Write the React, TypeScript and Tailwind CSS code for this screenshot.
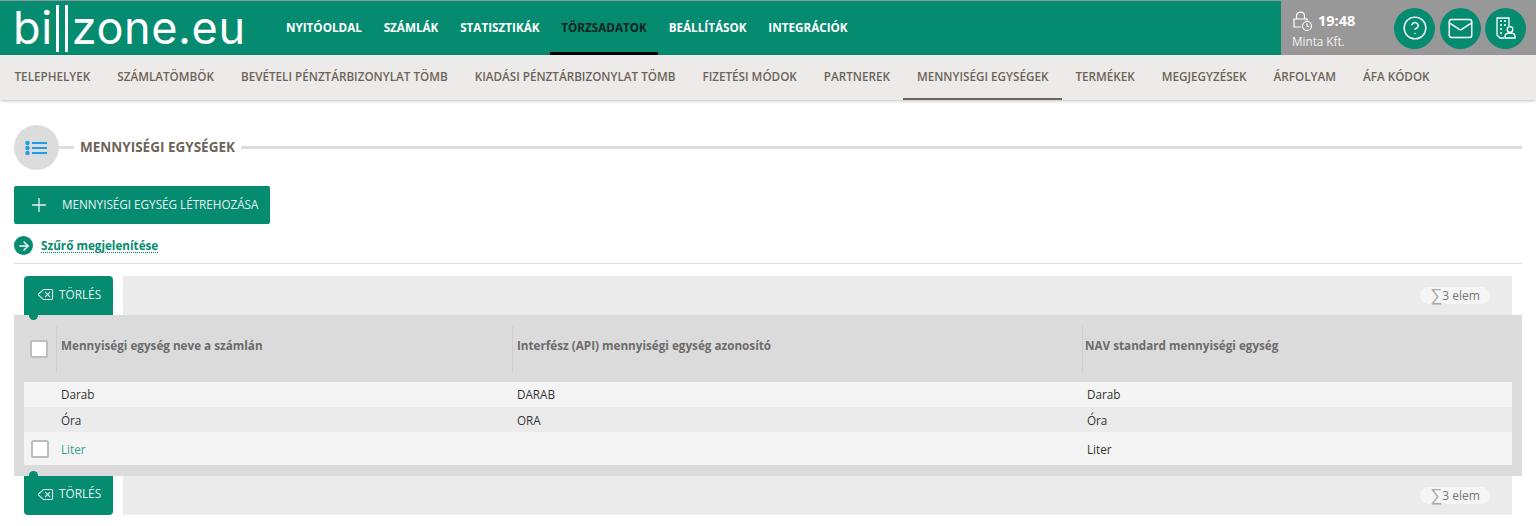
import React from "react";
import { ArrowRight, CircleHelp, Delete, Mail, Plus } from "lucide-react";

const mainNav = ["NYITÓOLDAL", "SZÁMLÁK", "STATISZTIKÁK", "TÖRZSADATOK", "BEÁLLÍTÁSOK", "INTEGRÁCIÓK"];
const subNav = [
  "TELEPHELYEK",
  "SZÁMLATÖMBÖK",
  "BEVÉTELI PÉNZTÁRBIZONYLAT TÖMB",
  "KIADÁSI PÉNZTÁRBIZONYLAT TÖMB",
  "FIZETÉSI MÓDOK",
  "PARTNEREK",
  "MENNYISÉGI EGYSÉGEK",
  "TERMÉKEK",
  "MEGJEGYZÉSEK",
  "ÁRFOLYAM",
  "ÁFA KÓDOK",
];

const Checkbox = () => (
  <span className="block h-[18px] w-[18px] rounded-[2px] border-2 border-[#bdbdbd] bg-white" />
);

const Toolbar = ({ bottom }: { bottom?: boolean }) => (
  <div className="mx-[10px] flex h-[39px] gap-[10px]">
    <div className="relative w-[89px] shrink-0">
      <button
        type="button"
        className={`flex h-full w-full items-center gap-[5px] bg-[#058b70] pl-[13px] text-[11.8px] text-[#e8f3f0] ${
          bottom ? "rounded-b-[4px] pb-[3px]" : "rounded-t-[4px] pb-[2px]"
        }`}
      >
        <Delete size={17} strokeWidth={1.5} />
        TÖRLÉS
      </button>
      <span
        className={`absolute left-[5px] h-[9px] w-[9px] rounded-full bg-[#058b70] ${
          bottom ? "top-[-5px]" : "bottom-[-5px]"
        }`}
      />
    </div>
    <div className="flex flex-1 items-center justify-end bg-[#ebebeb] pr-[22px]">
      <span className="flex h-[17px] w-[70px] items-center justify-center rounded-full bg-[#f5f5f5] text-[12px] text-[#77777c]">
        <span className="font-['Liberation_Sans',sans-serif] text-[17px] leading-none text-[#aaaaaa]">∑</span>3 elem
      </span>
    </div>
  </div>
);

const Row = ({
  cols,
  className,
  check,
}: {
  cols: string[];
  className: string;
  check?: boolean;
}) => (
  <div className={`flex items-center text-[11.7px] text-[#333] ${className}`}>
    <div className="flex w-[37px] shrink-0 pl-[7px]">{check && <Checkbox />}</div>
    <div className={`w-[456px] shrink-0 ${check ? "text-[#3a9d93]" : ""}`}>{cols[0]}</div>
    <div className="w-[570px] shrink-0">{cols[1]}</div>
    <div>{cols[2]}</div>
  </div>
);

const App = () => {
  return (
    <div className="h-[526px] overflow-hidden bg-white font-['Open_Sans',sans-serif]">
      <header className="flex h-[55px] border-t border-[#8d9a96] bg-[#058b70]">
        <div className="ml-[13px] flex w-[262px] items-center font-['Inter',sans-serif] text-[45px] font-normal leading-[54px] tracking-[0.6px] text-white">
          <span>bi</span>
          <span className="ml-[3px] h-[47px] w-[3px] bg-white" />
          <span className="ml-[6px] h-[47px] w-[3px] bg-white" />
          <span className="ml-[4px]">zone.eu</span>
        </div>
        <nav className="flex flex-1">
          {mainNav.map((item) => (
            <a
              key={item}
              className={`flex items-center border-b-[3px] px-[10.9px] pt-[2px] text-[11.7px] font-bold ${
                item === "TÖRZSADATOK" ? "border-black text-[#10231f]" : "border-transparent text-white"
              }`}
            >
              {item}
            </a>
          ))}
        </nav>
        <div className="flex w-[255px] items-center bg-[#999898] pl-[11px]">
          <div className="w-[102px] pt-[4px] text-white">
            <div className="flex items-center gap-[5px]">
              <svg width="21" height="21" viewBox="0 0 21 21" fill="none" stroke="currentColor" strokeWidth="1.2">
                <path d="M9 16H2V8H15V10" />
                <path d="M4.5 8V5C4.5 -0.3 12.5 -0.3 12.5 5V8" />
                <circle cx="15" cy="15" r="4.5" />
                <path d="M15 12.5V15L17 16" />
              </svg>
              <span className="text-[14.5px] font-bold leading-none">19:48</span>
            </div>
            <div className="mt-[2px] text-[11.7px] leading-[15px] text-[#f1f1f1]">Minta Kft.</div>
          </div>
          <div className="flex gap-[4.5px]">
            <span className="flex h-[41px] w-[41px] items-center justify-center rounded-full bg-[#058b70] text-white">
              <CircleHelp size={26} strokeWidth={1.3} />
            </span>
            <span className="flex h-[41px] w-[41px] items-center justify-center rounded-full bg-[#058b70] text-white">
              <Mail size={27} strokeWidth={1.3} />
            </span>
            <span className="flex h-[41px] w-[41px] items-center justify-center rounded-full bg-[#058b70] text-white">
              <svg width="22" height="22" viewBox="0 0 22 22" fill="none" stroke="currentColor" strokeWidth="1.3">
                <path d="M9 21H5L2 18V1H14V9" />
                <path d="M5 4H7M9 4H11M5 8H7M9 8H11M5 12H7M5 16H7" />
                <circle cx="15" cy="12.5" r="2.8" />
                <path d="M10 21V19C10 17 12 16 15 16C18 16 20 17 20 19V21Z" />
              </svg>
            </span>
          </div>
        </div>
      </header>

      <nav className="flex h-[45px] bg-[#ecebe9] pl-px shadow-[0_1px_3px_rgba(0,0,0,0.25)]">
        {subNav.map((item) => (
          <a
            key={item}
            className={`flex items-center border-b-2 px-[13.5px] text-[11.7px] font-semibold text-[#6d6459] ${
              item === "MENNYISÉGI EGYSÉGEK" ? "border-[#6d6459]" : "border-transparent"
            }`}
          >
            {item}
          </a>
        ))}
      </nav>

      <main className="px-[14px] pt-[25px]">
        <div className="flex items-center">
          <span className="flex h-[45px] w-[45px] shrink-0 items-center justify-center rounded-full bg-[#dcdcdc] pr-[1px] text-[#1a9fe6]">
            <svg width="22" height="14" viewBox="0 0 22 14" fill="none" stroke="currentColor" strokeWidth="2">
              <circle cx="2.5" cy="2" r="2.2" fill="currentColor" stroke="none" />
              <circle cx="2.5" cy="7" r="2.2" fill="currentColor" stroke="none" />
              <circle cx="2.5" cy="12" r="2.2" fill="currentColor" stroke="none" />
              <path d="M7 2H22M7 7H22M7 12H22" />
            </svg>
          </span>
          <span className="h-[3px] w-[15px] bg-[#dcdcdc]" />
          <h1 className="px-[6px] text-[13.5px] font-bold text-[#6d6459]">MENNYISÉGI EGYSÉGEK</h1>
          <span className="h-[3px] flex-1 bg-[#dcdcdc]" />
        </div>

        <button
          type="button"
          className="mt-[16px] flex h-[38px] w-[256px] items-center rounded-[2px] bg-[#058b70] pl-[14px] text-[11.7px] text-[#e8f3f0]"
        >
          <Plus size={22} strokeWidth={1.4} />
          <span className="ml-[12px]">MENNYISÉGI EGYSÉG LÉTREHOZÁSA</span>
        </button>

        <div className="mt-[12px] flex items-center gap-[8px] border-b border-[#dddddd] pb-[8px]">
          <span className="flex h-[19px] w-[19px] items-center justify-center rounded-full bg-[#058b70] text-white">
            <ArrowRight size={14} strokeWidth={2.5} />
          </span>
          <a className="text-[11.7px] font-bold text-[#058b70] underline decoration-dotted underline-offset-2">
            Szűrő megjelenítése
          </a>
        </div>

        <div className="mt-[12px]">
          <Toolbar />
          <div className="bg-[#dbdbdb] px-[10px] pb-[11px]">
            <div className="flex h-[67px] items-center text-[11.7px] font-bold text-[#6b6b6b]">
              <div className="flex h-[46px] w-[33px] shrink-0 items-center border-r border-[#cfcfcf] pl-[6px]">
                <Checkbox />
              </div>
              <div className="flex h-[46px] w-[456px] shrink-0 items-center border-r border-[#cfcfcf] pl-[4px] pb-[6px]">
                Mennyiségi egység neve a számlán
              </div>
              <div className="flex h-[46px] w-[570px] shrink-0 items-center border-r border-[#cfcfcf] pl-[4px] pb-[6px]">
                Interfész (API) mennyiségi egység azonosító
              </div>
              <div className="flex h-[46px] items-center pl-[2px] pb-[6px]">NAV standard mennyiségi egység</div>
            </div>
            <Row cols={["Darab", "DARAB", "Darab"]} className="h-[25px] bg-[#f4f4f4]" />
            <Row cols={["Óra", "ORA", "Óra"]} className="h-[25px] bg-[#ebebeb] pt-[2px]" />
            <Row cols={["Liter", "", "Liter"]} className="h-[33px] bg-[#f4f4f4] [&>div:not(:first-child)]:pt-[2px]" check />
          </div>
          <Toolbar bottom />
        </div>
      </main>
    </div>
  );
};

export default App;
